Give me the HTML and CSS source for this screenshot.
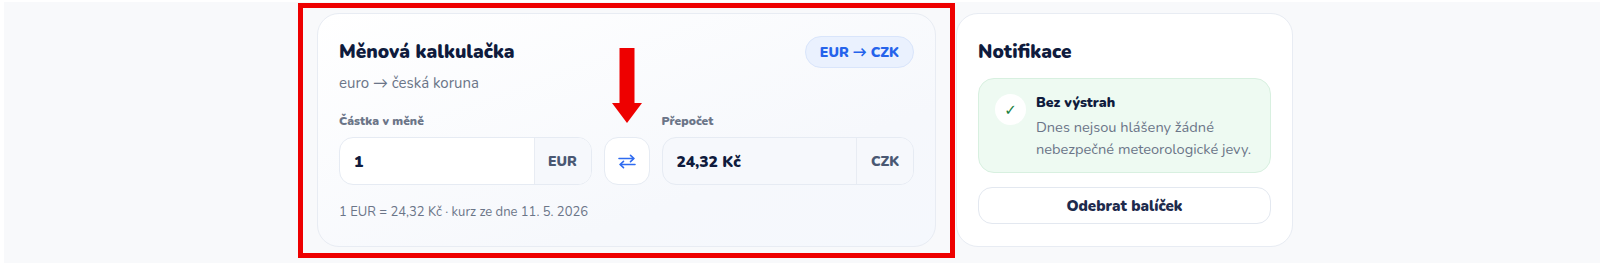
FILE: index.html
```html
<!DOCTYPE html>
<html lang="cs">
<head>
    <meta charset="UTF-8">
    <meta name="viewport" content="width=device-width, initial-scale=1.0">
    <title>Měnová kalkulačka</title>
    <link rel="stylesheet" href="styles.css">
</head>
<body>
    <div class="page">
        <div class="layout">
            <div class="card calc">
                <div class="calc-head">
                    <div>
                        <h2>Měnová kalkulačka</h2>
                        <div class="subtitle">euro → česká koruna</div>
                    </div>
                    <span class="pill">EUR → CZK</span>
                </div>

                <div class="fields">
                    <div class="field">
                        <label>Částka v měně</label>
                        <div class="box">
                            <span class="value">1</span>
                            <span class="suffix">EUR</span>
                        </div>
                    </div>
                    <button class="swap" title="Prohodit">
                        <svg width="20" height="17" viewBox="0 0 20 17" fill="none" stroke="#2f6bf0" stroke-width="1.6" stroke-linecap="round" stroke-linejoin="round">
                            <path d="M2 5.5h15M13.5 2.3 17 5.5l-3.5 3.2"/>
                            <path d="M18 11.5H3M6.5 8.3 3 11.5l3.5 3.2"/>
                        </svg>
                    </button>
                    <div class="field">
                        <label>Přepočet</label>
                        <div class="box result">
                            <span class="value">24,32 Kč</span>
                            <span class="suffix">CZK</span>
                        </div>
                    </div>
                </div>

                <div class="rate">1 EUR = 24,32 Kč · kurz ze dne 11. 5. 2026</div>
            </div>

            <div class="card notify">
                <h2>Notifikace</h2>
                <div class="alert">
                    <span class="check">✓</span>
                    <div>
                        <div class="alert-title">Bez výstrah</div>
                        <div class="alert-text">Dnes nejsou hlášeny žádné nebezpečné meteorologické jevy.</div>
                    </div>
                </div>
                <button class="remove">Odebrat balíček</button>
            </div>
        </div>

        <!-- annotation -->
        <div class="mark-box"></div>
        <div class="mark-arrow">
            <svg width="30" height="76" viewBox="0 0 30 76">
                <path d="M7.5 0h15v55H30L15 75 0 55h7.5z" fill="#ee0000"/>
            </svg>
        </div>
    </div>
</body>
</html>
```

FILE: styles.css
```css
body {
    margin: 0;
    background-color: #ffffff;
    font-family: Nunito, Lato, "Noto Sans", sans-serif;
    color: #0f1b3d;
}
.page {
    position: relative;
    margin: 2px 1px 1px 4px;
    height: 261px;
    background-color: #f8f9fb;
    box-sizing: border-box;
    padding: 11px 0 0 313px;
}
.layout {
    display: grid;
    grid-template-columns: 619px 337px;
    gap: 20px;
}
.card {
    box-sizing: border-box;
    height: 234px;
    border: 1px solid #e8ecf3;
    border-radius: 22px;
    background-color: #ffffff;
    padding: 24px 21px 22px;
}
.calc {
    background: linear-gradient(160deg, #ffffff 0%, #f6f8fc 70%, #f5f8fd 100%);
}
h2 {
    margin: 0;
    font-size: 19px;
    line-height: 28px;
    font-weight: 900;
    color: #0f1b3d;
}
.calc-head {
    display: flex;
    justify-content: space-between;
    align-items: flex-start;
}
.subtitle {
    margin-top: 7px;
    font-size: 15px;
    line-height: 20px;
    color: #6b7588;
}
.pill {
    box-sizing: border-box;
    height: 32px;
    margin-top: -2px;
    padding: 0 14px;
    display: inline-flex;
    align-items: center;
    border-radius: 16px;
    background-color: #eaf1fe;
    border: 1px solid #d9e5fb;
    color: #2563eb;
    font-size: 14px;
    font-weight: 900;
}
.fields {
    margin-top: 20px;
    display: grid;
    grid-template-columns: 1fr 46px 1fr;
    gap: 12px;
    align-items: end;
}
.field label {
    display: block;
    font-size: 12px;
    line-height: 16px;
    font-weight: 900;
    color: #6b7588;
    margin-bottom: 8px;
}
.box {
    box-sizing: border-box;
    height: 48px;
    display: flex;
    border: 1px solid #e6ebf3;
    border-radius: 14px;
    background-color: #ffffff;
    overflow: hidden;
}
.box.result {
    background-color: #f6f8fc;
}
.value {
    flex: 1;
    display: flex;
    align-items: center;
    padding: 0 14px;
    font-size: 15.5px;
    font-weight: 900;
    color: #0f1b3d;
}
.suffix {
    width: 56px;
    display: flex;
    align-items: center;
    justify-content: center;
    border-left: 1px solid #e8ecf3;
    background-color: #f6f8fc;
    font-size: 14px;
    font-weight: 900;
    color: #4a5873;
}
.swap {
    box-sizing: border-box;
    width: 46px;
    height: 48px;
    padding: 0;
    border: 1px solid #e6ebf3;
    border-radius: 14px;
    background-color: #ffffff;
    display: flex;
    align-items: center;
    justify-content: center;
    cursor: pointer;
}
.rate {
    margin-top: 18px;
    font-size: 13px;
    line-height: 18px;
    color: #6b7588;
}
.alert {
    margin-top: 12px;
    box-sizing: border-box;
    height: 95px;
    display: flex;
    gap: 10px;
    padding: 15px 16px;
    border: 1px solid #d8f0e0;
    border-radius: 16px;
    background-color: #eefaf2;
}
.check {
    flex: none;
    width: 31px;
    height: 31px;
    border-radius: 50%;
    background-color: #ffffff;
    display: flex;
    align-items: center;
    justify-content: center;
    color: #16803c;
    font-size: 15px;
    font-family: "DejaVu Sans", sans-serif;
}
.alert-title {
    font-size: 14px;
    line-height: 18px;
    font-weight: 900;
    color: #0f1b3d;
}
.alert-text {
    margin-top: 4px;
    font-size: 14.6px;
    line-height: 22px;
    color: #6b7588;
}
.remove {
    margin-top: 14px;
    width: 100%;
    height: 37px;
    border: 1px solid #e3e8f0;
    border-radius: 14px;
    background-color: #ffffff;
    font-family: inherit;
    font-size: 15px;
    font-weight: 900;
    color: #1e2b4d;
    cursor: pointer;
}
.mark-box {
    position: absolute;
    left: 294px;
    top: 1px;
    width: 657px;
    height: 255px;
    box-sizing: border-box;
    border: 5px solid #ee0000;
}
.mark-arrow {
    position: absolute;
    left: 608px;
    top: 46px;
    line-height: 0;
}
```
